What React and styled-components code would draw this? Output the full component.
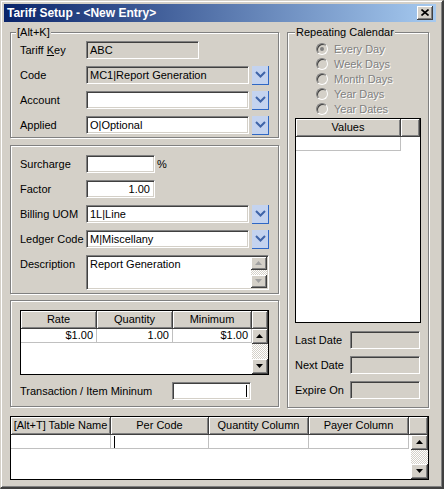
import React from 'react'
import styled, { createGlobalStyle } from 'styled-components'

const GlobalStyle = createGlobalStyle`
  html, body {
    margin: 0;
    padding: 0;
    background: #d4d0c8;
  }
  body {
    font-family: "Liberation Sans", Arial, sans-serif;
    font-size: 11px;
    color: #000;
  }
`

const Win = styled.div`
  width: 444px;
  height: 489px;
  box-sizing: border-box;
  background: #d4d0c8;
  border-style: solid;
  border-width: 1px 2px 2px 1px;
  border-color: #d4d0c8 #404040 #404040 #d4d0c8;
  box-shadow: inset 1px 1px #fff, inset -1px -1px #808080;
  padding: 3px 6px 2px 3px;
  display: flex;
  flex-direction: column;
`

const TitleBar = styled.div`
  height: 18px;
  flex: none;
  display: flex;
  align-items: center;
  justify-content: space-between;
  padding: 0 3px;
  background: linear-gradient(to right, #0a246a, #a6caf0);
  color: #fff;
  font-weight: bold;
  font-size: 12px;
`

const CloseBtn = styled.div`
  width: 16px;
  height: 14px;
  box-sizing: border-box;
  background: #d4d0c8;
  border-right: 1px solid #404040;
  border-bottom: 1px solid #404040;
  box-shadow: inset 1px 1px #fff, inset -1px -1px #808080;
  display: flex;
  align-items: center;
  justify-content: center;
`

const Content = styled.div`
  padding: 4px 0 0 6px;
  display: flex;
  flex-direction: column;
`

const Columns = styled.div`
  display: flex;
  gap: 8px;
  align-items: stretch;
`

const LeftCol = styled.div`
  width: 269px;
  display: flex;
  flex-direction: column;
`

const Group = styled.fieldset`
  margin: ${p => p.$mt || 0}px 0 0 0;
  padding: ${p => p.$pt || 0}px 0 0 ${p => p.$pl || 9}px;
  width: ${p => p.$w}px;
  height: ${p => p.$h}px;
  box-sizing: border-box;
  min-width: 0;
  border: 1px solid #808080;
  box-shadow: 1px 1px 0 #fff, inset 1px 1px 0 #fff;
  display: flex;
  flex-direction: column;
`

const Legend = styled.legend`
  padding: 0 1px;
  margin-left: ${p => p.$ml || 0}px;
  background: #d4d0c8;
  line-height: 13px;
  font-size: 11px;
`

const Row = styled.div`
  display: flex;
  align-items: ${p => p.$top ? 'flex-start' : 'center'};
  height: ${p => p.$h || 18}px;
  margin-top: ${p => p.$mt || 0}px;
`

const Label = styled.div`
  width: ${p => p.$w || 66}px;
  flex: none;
  white-space: nowrap;
  padding-top: ${p => p.$pt || 0}px;
`

const Field = styled.div`
  width: ${p => p.$w}px;
  height: ${p => p.$h || 18}px;
  flex: none;
  box-sizing: border-box;
  border: 1px solid;
  border-color: #808080 #fff #fff #808080;
  box-shadow: inset 1px 1px #404040, inset -1px -1px #d4d0c8;
  background: ${p => (p.$off ? '#d4d0c8' : '#fff')};
  padding: 0 4px 0 3px;
  line-height: 16px;
  text-align: ${p => p.$align || 'left'};
  white-space: nowrap;
  overflow: hidden;
  position: relative;
`

const TextArea = styled(Field)`
  display: flex;
  padding: 1px 1px 1px 3px;
`

const AreaText = styled.div`
  flex: 1;
  line-height: 15px;
`

const DropBtn = styled.div`
  width: 17px;
  height: 19px;
  margin-left: 3px;
  box-sizing: border-box;
  background: #c4d3ef;
  border-right: 1px solid #2f67c4;
  border-bottom: 1px solid #2f67c4;
  display: flex;
  align-items: center;
  justify-content: center;
`

const Unit = styled.span`
  margin-left: 2px;
`

const Table = styled.div`
  display: flex;
  width: ${p => p.$w}px;
  height: ${p => p.$h}px;
  box-sizing: border-box;
  border: 1px solid #000;
  background: #fff;
  flex: none;
`

const TableMain = styled.div`
  flex: 1;
  display: flex;
  flex-direction: column;
`

const HeadRow = styled.div`
  display: grid;
  grid-template-columns: ${p => p.$cols};
  height: 18px;
`

const HeadCell = styled.div`
  box-sizing: border-box;
  height: 18px;
  background: #d4d0c8;
  border-right: 1px solid #404040;
  border-bottom: 1px solid #404040;
  box-shadow: inset 1px 1px #fff, inset -1px -1px #808080;
  line-height: 16px;
  text-align: center;
  white-space: nowrap;
  overflow: hidden;
`

const DataRow = styled.div`
  display: grid;
  grid-template-columns: ${p => p.$cols};
  height: 14px;
`

const Cell = styled.div`
  box-sizing: border-box;
  border-right: 1px solid #c0c0c0;
  border-bottom: 1px solid #c0c0c0;
  padding: 0 3px;
  line-height: 13px;
  display: flex;
  align-items: center;
  justify-content: ${p => (p.$align === 'right' ? 'flex-end' : 'flex-start')};
`

const SideCol = styled.div`
  width: ${p => p.$w}px;
  flex: none;
  display: flex;
  flex-direction: column;
`

const Scroll = styled.div`
  flex: ${p => (p.$fixed ? 'none' : '1')};
  display: flex;
  flex-direction: column;
  width: ${p => p.$w || 17}px;
  margin-left: auto;
`

const ScrollBtn = styled.div`
  height: ${p => p.$h || 15}px;
  flex: none;
  box-sizing: border-box;
  background: #d4d0c8;
  border-right: 1px solid #404040;
  border-bottom: 1px solid #404040;
  box-shadow: inset 1px 1px #fff, inset -1px -1px #808080;
  display: flex;
  align-items: center;
  justify-content: center;
`

const Track = styled.div`
  flex: 1;
  background-image: conic-gradient(#fff 25%, #d4d0c8 0 50%, #fff 0 75%, #d4d0c8 0);
  background-size: 2px 2px;
`

const Caret = styled.span`
  display: inline-block;
  width: 1px;
  height: 12px;
  background: #000;
`

const FieldCaret = styled(Caret)`
  position: absolute;
  right: 3px;
  top: 2px;
`

const RightGroupBody = styled.div`
  display: flex;
  flex-direction: column;
`

const RadioRow = styled.div`
  display: flex;
  align-items: center;
  height: 15px;
  padding-left: 21px;
  color: #808080;
  text-shadow: 1px 1px #fff;
`

const RadioDot = styled.span`
  width: 12px;
  height: 12px;
  box-sizing: border-box;
  border-radius: 50%;
  border: 1px solid;
  border-color: #808080 #fff #fff #808080;
  box-shadow: inset 1px 1px #404040;
  background: #d4d0c8;
  margin-right: 6px;
  display: flex;
  align-items: center;
  justify-content: center;
  &::after {
    content: '';
    width: 4px;
    height: 4px;
    border-radius: 50%;
    background: ${p => (p.$on ? '#808080' : 'transparent')};
  }
`

const DateRow = styled(Row)`
  margin-top: ${p => p.$mt || 7}px;
`

const Arrow = ({ up, color = '#000' }) => (
  <svg width="7" height="4" viewBox="0 0 7 4">
    <path d={up ? 'M3.5 0 L7 4 L0 4 Z' : 'M0 0 L7 0 L3.5 4 Z'} fill={color} />
  </svg>
)

const Chevron = () => (
  <svg width="11" height="7" viewBox="0 0 11 7">
    <path d="M1 1 L5.5 5.5 L10 1" fill="none" stroke="#3f64a8" strokeWidth="2" />
  </svg>
)

const ScrollBar = ({ w, btn, dim, fixed }) => (
  <Scroll $w={w} $fixed={fixed}>
    <ScrollBtn $h={btn}><Arrow up color={dim ? '#a0a0a0' : '#000'} /></ScrollBtn>
    <Track />
    <ScrollBtn $h={btn}><Arrow color={dim ? '#a0a0a0' : '#000'} /></ScrollBtn>
  </Scroll>
)

const Combo = ({ label, value, off }) => (
  <Row $mt={7}>
    <Label>{label}</Label>
    <Field $w={163} $off={off}>{value}</Field>
    <DropBtn><Chevron /></DropBtn>
  </Row>
)

const rateCols = '76px 76px 79px'
const bottomCols = '100px 98px 100px 100px'
const radios = ['Every Day', 'Week Days', 'Month Days', 'Year Days', 'Year Dates']

export default function App() {
  return (
    <>
      <GlobalStyle />
      <Win>
        <TitleBar>
          <span>Tariff Setup - &lt;New Entry&gt;</span>
          <CloseBtn>
            <svg width="8" height="7" viewBox="0 0 8 7">
              <path d="M0.5 0.5 L7.5 6.5 M7.5 0.5 L0.5 6.5" stroke="#000" strokeWidth="1.6" />
            </svg>
          </CloseBtn>
        </TitleBar>
        <Content>
          <Columns>
            <LeftCol>
              <Group $w={269} $h={112} $pt={2}>
                <Legend $ml={-4}>[Alt+K]</Legend>
                <Row>
                  <Label>Tariff <u>K</u>ey</Label>
                  <Field $w={113} $off>ABC</Field>
                </Row>
                <Combo label="Code" value="MC1|Report Generation" off />
                <Combo label="Account" value="" />
                <Combo label="Applied" value="O|Optional" />
              </Group>

              <Group $w={269} $h={149} $pt={9} $mt={7}>
                <Row>
                  <Label>Surcharge</Label>
                  <Field $w={69} />
                  <Unit>%</Unit>
                </Row>
                <Row $mt={7}>
                  <Label>Factor</Label>
                  <Field $w={69} $align="right">1.00</Field>
                </Row>
                <Combo label="Billing UOM" value="1L|Line" />
                <Combo label="Ledger Code" value="M|Miscellany" />
                <Row $mt={7} $h={35} $top>
                  <Label $pt={3}>Description</Label>
                  <TextArea $w={183} $h={35}>
                    <AreaText>Report Generation</AreaText>
                    <ScrollBar w={16} btn={13} dim fixed />
                  </TextArea>
                </Row>
              </Group>

              <Group $w={269} $h={107} $pt={9} $mt={6}>
                <Table $w={249} $h={65}>
                  <TableMain>
                    <HeadRow $cols={rateCols}>
                      <HeadCell>Rate</HeadCell>
                      <HeadCell>Quantity</HeadCell>
                      <HeadCell>Minimum</HeadCell>
                    </HeadRow>
                    <DataRow $cols={rateCols}>
                      <Cell $align="right">$1.00</Cell>
                      <Cell $align="right">1.00</Cell>
                      <Cell $align="right">$1.00</Cell>
                    </DataRow>
                  </TableMain>
                  <SideCol $w={16}>
                    <HeadCell />
                    <ScrollBar w={16} btn={15} />
                  </SideCol>
                </Table>
                <Row $mt={7}>
                  <Label $w={152}>Transaction / Item Mininum</Label>
                  <Field $w={79}><FieldCaret /></Field>
                </Row>
              </Group>
            </LeftCol>

            <Group $w={142} $h={382} $pt={2} $pl={7}>
              <Legend>Repeating Calendar</Legend>
              <RightGroupBody>
                {radios.map((r, i) => (
                  <RadioRow key={r}>
                    <RadioDot $on={i === 0} />
                    {r}
                  </RadioRow>
                ))}
                <Table $w={126} $h={205} style={{ marginTop: 2 }}>
                  <TableMain>
                    <HeadRow $cols="105px">
                      <HeadCell>Values</HeadCell>
                    </HeadRow>
                    <DataRow $cols="105px">
                      <Cell />
                    </DataRow>
                  </TableMain>
                  <SideCol $w={19}>
                    <HeadCell />
                  </SideCol>
                </Table>
                <DateRow $mt={8}>
                  <Label $w={55}>Last Date</Label>
                  <Field $w={70} $off />
                </DateRow>
                <DateRow>
                  <Label $w={55}>Next Date</Label>
                  <Field $w={70} $off />
                </DateRow>
                <DateRow>
                  <Label $w={55}>Expire On</Label>
                  <Field $w={70} $off />
                </DateRow>
              </RightGroupBody>
            </Group>
          </Columns>

          <Table $w={419} $h={64} style={{ marginTop: 8 }}>
            <TableMain>
              <HeadRow $cols={bottomCols}>
                <HeadCell>[Alt+T] Table Name</HeadCell>
                <HeadCell>Per Code</HeadCell>
                <HeadCell>Quantity Column</HeadCell>
                <HeadCell>Payer Column</HeadCell>
              </HeadRow>
              <DataRow $cols={bottomCols}>
                <Cell />
                <Cell><Caret /></Cell>
                <Cell />
                <Cell />
              </DataRow>
            </TableMain>
            <SideCol $w={19}>
              <HeadCell />
              <ScrollBar w={17} btn={15} />
            </SideCol>
          </Table>
        </Content>
      </Win>
    </>
  )
}
